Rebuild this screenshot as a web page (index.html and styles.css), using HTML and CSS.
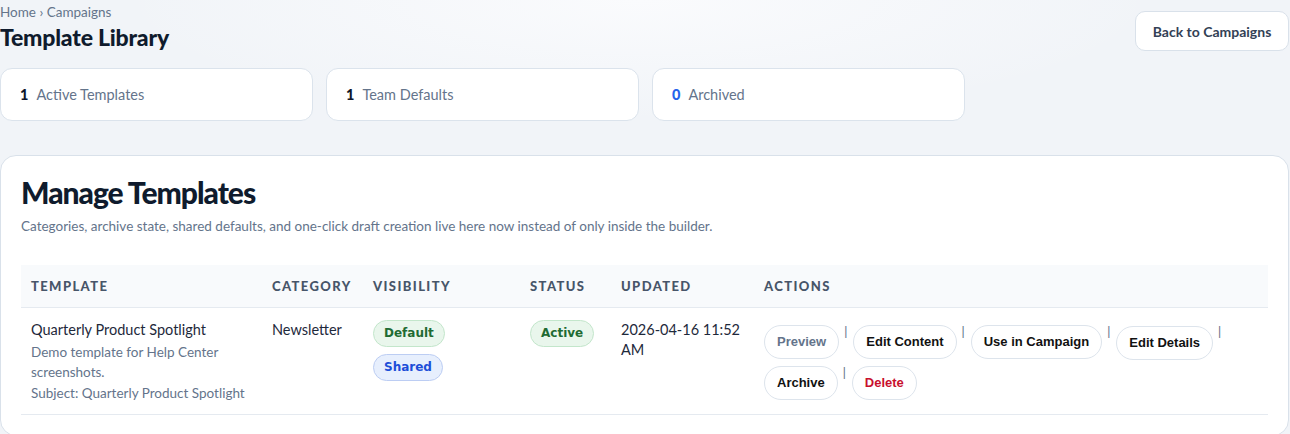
FILE: index.html
```html
<!doctype html>
<html>
    <head>
        <meta charset="utf-8">
        <title>Template Library</title>
        <link rel="stylesheet" href="styles.css">
    </head>
    <body>
        <div class="page">
            <header class="top">
                <div>
                    <div class="crumbs">Home › Campaigns</div>
                    <h1>Template Library</h1>
                </div>
                <a class="btn-back" href="#">Back to Campaigns</a>
            </header>

            <div class="stats">
                <div class="stat"><b>1</b> Active Templates</div>
                <div class="stat"><b>1</b> Team Defaults</div>
                <div class="stat"><b class="blue">0</b> Archived</div>
            </div>

            <section class="card">
                <h2>Manage Templates</h2>
                <p class="lead">Categories, archive state, shared defaults, and one-click draft creation live here now instead of only inside the builder.</p>

                <table class="grid">
                    <thead>
                        <tr>
                            <th class="c-name">Template</th>
                            <th class="c-cat">Category</th>
                            <th class="c-vis">Visibility</th>
                            <th class="c-status">Status</th>
                            <th class="c-date">Updated</th>
                            <th>Actions</th>
                        </tr>
                    </thead>
                    <tbody>
                        <tr>
                            <td>
                                <div class="name">Quarterly Product Spotlight</div>
                                <div class="muted">Demo template for Help Center screenshots.</div>
                                <div class="muted">Subject: Quarterly Product Spotlight</div>
                            </td>
                            <td>Newsletter</td>
                            <td>
                                <span class="pill green">Default</span>
                                <span class="pill blue">Shared</span>
                            </td>
                            <td><span class="pill green">Active</span></td>
                            <td>2026-04-16 11:52 AM</td>
                            <td>
                                <div class="actions">
                                    <a class="act dim" href="#">Preview</a><span class="sep">|</span>
                                    <a class="act" href="#">Edit Content</a><span class="sep">|</span>
                                    <a class="act" href="#">Use in Campaign</a><span class="sep">|</span>
                                    <a class="act low" href="#">Edit Details</a><span class="sep">|</span>
                                    <a class="act" href="#">Archive</a><span class="sep">|</span>
                                    <a class="act red" href="#">Delete</a>
                                </div>
                            </td>
                        </tr>
                    </tbody>
                </table>
            </section>
        </div>
    </body>
</html>
```

FILE: styles.css
```css
* {
    margin: 0;
    padding: 0;
    box-sizing: border-box;
}
body {
    background: #f1f4f8;
    background-image: radial-gradient(ellipse 520px 120px at 640px 0, #fafbfd, rgba(250,251,253,0));
    font-family: Lato, "Noto Sans", sans-serif;
    color: #1e293b;
    height: 434px;
    overflow: hidden;
}
a {
    text-decoration: none;
    color: inherit;
}
.page {
    padding-top: 4px;
}
.top {
    display: flex;
    justify-content: space-between;
    align-items: flex-start;
}
.crumbs {
    font-size: 13.5px;
    color: #64748b;
    line-height: 16px;
}
h1 {
    font-size: 23px;
    font-weight: 900;
    color: #0f1b2d;
    letter-spacing: -0.2px;
    line-height: 34px;
}
.btn-back {
    margin-top: 7px;
    margin-right: 1px;
    height: 40px;
    width: 154px;
    display: flex;
    align-items: center;
    justify-content: center;
    background: #fff;
    border: 1px solid #d9e1ea;
    border-radius: 10px;
    font-size: 14px;
    font-weight: 700;
    color: #334155;
}
.stats {
    display: flex;
    gap: 13px;
    margin-top: 14px;
}
.stat {
    width: 313px;
    height: 53px;
    background: #fff;
    border: 1px solid #dbe3ec;
    border-radius: 12px;
    display: flex;
    align-items: center;
    padding-left: 19px;
    font-size: 14.5px;
    color: #64748b;
}
.stat b {
    color: #0f172a;
    font-weight: 900;
    margin-right: 8px;
}
.stat b.blue {
    color: #2563eb;
}
.card {
    margin-top: 34px;
    margin-right: 1px;
    background: #fff;
    border: 1px solid #d9e1ea;
    border-radius: 16px;
    padding: 18px 20px 20px 20px;
}
h2 {
    font-size: 30px;
    font-weight: 900;
    letter-spacing: -1px;
    color: #0f1b2d;
    line-height: 36px;
}
.lead {
    font-size: 13.5px;
    color: #64748b;
    margin-top: 7px;
    line-height: 18px;
}
.grid {
    width: 100%;
    border-collapse: collapse;
    margin-top: 30px;
}
.grid th {
    background: #f8fafc;
    text-align: left;
    font-size: 13px;
    font-weight: 900;
    letter-spacing: 1.4px;
    text-transform: uppercase;
    color: #475569;
    height: 42px;
    padding: 0 10px;
    border-bottom: 1px solid #e5eaf0;
}
.c-name { width: 241px; }
.c-cat { width: 101px; }
.c-vis { width: 157px; }
.c-status { width: 91px; }
.c-date { width: 143px; }
.grid td {
    vertical-align: top;
    padding: 12px 10px 11px;
    font-size: 14.5px;
    line-height: 20px;
    color: #1e293b;
    border-bottom: 1px solid #e5eaf0;
}
.name {
    margin-bottom: 2px;
}
.muted {
    font-size: 13.5px;
    color: #64748b;
    line-height: 20px;
}
.muted + .muted {
    margin-top: 1px;
}
.pill {
    display: inline-block;
    font-family: "DejaVu Sans", Verdana, sans-serif;
    font-weight: 700;
    font-size: 12px;
    line-height: 25px;
    padding: 0 10px;
    border-radius: 14px;
    border: 1px solid;
    margin-bottom: 7px;
}
.pill.green {
    background: #e9f6ec;
    border-color: #c3e6cb;
    color: #1f6b33;
}
.pill.blue {
    background: #e7effd;
    border-color: #bccdf3;
    color: #1d4ed8;
}
.actions {
    display: flex;
    flex-wrap: wrap;
    align-items: flex-start;
    row-gap: 6px;
    padding-top: 5px;
}
.act {
    display: inline-block;
    height: 34px;
    line-height: 32px;
    padding: 0 12px;
    border: 1px solid #dde4ec;
    border-radius: 17px;
    background: #fff;
    font-family: "Liberation Sans", Arial, sans-serif;
    font-weight: 700;
    font-size: 13px;
    color: #111;
}
.act.dim {
    color: #64748b;
}
.act.red {
    color: #c8102e;
}
.act.low {
    margin-top: 1px;
}
.sep {
    font-family: "Liberation Sans", Arial, sans-serif;
    font-size: 12px;
    line-height: 12px;
    color: #64748b;
    padding: 0 6px 0 5px;
}
```
